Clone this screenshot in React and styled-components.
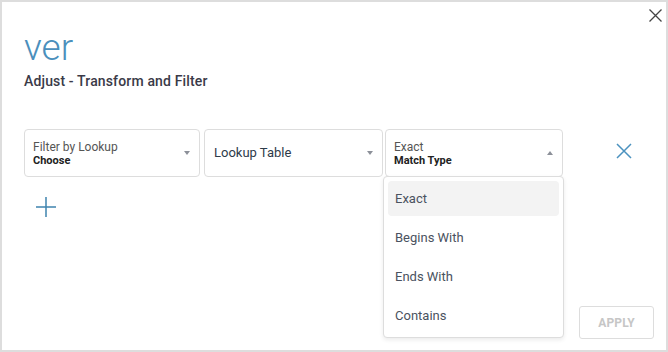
import styled, { createGlobalStyle } from "styled-components";

const GlobalStyle = createGlobalStyle`
  html, body {
    margin: 0;
    padding: 0;
    background: #fff;
  }
  * {
    box-sizing: border-box;
  }
`;

// Cadre du dialogue
const Frame = styled.div`
  position: relative;
  width: 668px;
  height: 352px;
  border: 2px solid #dddddd;
  background: #fff;
  display: flex;
  flex-direction: column;
  padding: 24px 12px 11px 22px;
  font-family: Roboto, "Liberation Sans", Arial, sans-serif;
`;

const CloseButton = styled.button`
  position: absolute;
  top: 5px;
  right: 3px;
  width: 16px;
  height: 16px;
  padding: 0;
  border: none;
  background: none;
  cursor: pointer;
  display: flex;
  align-items: center;
  justify-content: center;
`;

const Title = styled.h1`
  margin: 0;
  font-size: 37px;
  line-height: 44px;
  font-weight: 300;
  color: #4b8fbc;
`;

const Subtitle = styled.h2`
  margin: 2px 0 0;
  font-size: 14px;
  line-height: 18px;
  font-weight: 500;
  letter-spacing: 0.15px;
  color: #3a3a48;
`;

const FilterRow = styled.div`
  display: flex;
  align-items: flex-start;
  gap: 2px;
  margin-top: 39px;
`;

const SelectWrap = styled.div`
  position: relative;
  width: ${(p) => p.$w}px;
  margin-right: ${(p) => p.$mr || 0}px;
`;

const SelectBox = styled.div`
  height: 48px;
  border: 1px solid #dddddd;
  border-radius: 4px;
  background: #fff;
  display: flex;
  align-items: center;
  padding: 0 9px 0 8px;
  cursor: pointer;
`;

const SelectText = styled.div`
  flex: 1;
  display: flex;
  flex-direction: column;
  min-width: 0;
`;

const Label = styled.span`
  font-size: 12px;
  line-height: 15px;
  color: #555;
`;

const Value = styled.span`
  font-size: 11px;
  line-height: 12px;
  font-weight: 700;
  color: #222;
`;

const Placeholder = styled.span`
  font-size: 13px;
  line-height: 16px;
  color: #2e3b4a;
  padding-left: 1px;
`;

const Caret = styled.span`
  width: 0;
  height: 0;
  border-left: 3.5px solid transparent;
  border-right: 3.5px solid transparent;
  ${(p) =>
    p.$up
      ? "border-bottom: 4px solid #8c9099;"
      : "border-top: 4px solid #8c9099;"}
  margin-top: -1px;
`;

const Menu = styled.ul`
  position: absolute;
  top: 47px;
  left: -2px;
  width: 181px;
  margin: 0;
  padding: 4px;
  list-style: none;
  background: #fff;
  border: 1px solid #dddddd;
  border-radius: 4px;
  box-shadow: 0 2px 4px rgba(0, 0, 0, 0.08);
  display: flex;
  flex-direction: column;
  gap: 4px;
  z-index: 2;
`;

const MenuItem = styled.li`
  height: 35px;
  display: flex;
  align-items: center;
  padding: 0 7px;
  border-radius: 4px;
  font-size: 13px;
  color: #4a5260;
  background: ${(p) => (p.$active ? "#f3f3f3" : "transparent")};
  cursor: pointer;
`;

const IconButton = styled.button`
  width: ${(p) => p.$size}px;
  height: ${(p) => p.$size}px;
  padding: 0;
  border: none;
  background: none;
  cursor: pointer;
  display: flex;
  align-items: center;
  justify-content: center;
  margin: ${(p) => p.$margin || 0};
`;

const Footer = styled.div`
  margin-top: auto;
  display: flex;
  justify-content: flex-end;
`;

const ApplyButton = styled.button`
  width: 75px;
  height: 33px;
  border: 1px solid #dddddd;
  border-radius: 3px;
  background: #fff;
  color: #c6c6c6;
  font-family: Roboto, "Liberation Sans", Arial, sans-serif;
  font-size: 12px;
  font-weight: 700;
  letter-spacing: 0.1px;
  cursor: default;
`;

const matchTypes = ["Exact", "Begins With", "Ends With", "Contains"];

function App() {
  return (
    <>
      <GlobalStyle />
      <Frame>
        <CloseButton aria-label="Close">
          <svg width="13" height="13" viewBox="0 0 13 13">
            <path d="M0.5 0.5 L12.5 12.5 M12.5 0.5 L0.5 12.5" stroke="#444" strokeWidth="1.3" />
          </svg>
        </CloseButton>

        <Title>ver</Title>
        <Subtitle>Adjust - Transform and Filter</Subtitle>

        <FilterRow>
          <SelectWrap $w={176} $mr={2}>
            <SelectBox>
              <SelectText>
                <Label>Filter by Lookup</Label>
                <Value>Choose</Value>
              </SelectText>
              <Caret />
            </SelectBox>
          </SelectWrap>

          <SelectWrap $w={179}>
            <SelectBox>
              <SelectText>
                <Placeholder>Lookup Table</Placeholder>
              </SelectText>
              <Caret />
            </SelectBox>
          </SelectWrap>

          <SelectWrap $w={178}>
            <SelectBox>
              <SelectText>
                <Label>Exact</Label>
                <Value>Match Type</Value>
              </SelectText>
              <Caret $up />
            </SelectBox>
            <Menu>
              {matchTypes.map((m, i) => (
                <MenuItem key={m} $active={i === 0}>
                  {m}
                </MenuItem>
              ))}
            </Menu>
          </SelectWrap>

          <IconButton $size={16} $margin="14px 0 0 51px" aria-label="Remove">
            <svg width="16" height="16" viewBox="0 0 16 16">
              <path d="M1 1 L15 15 M15 1 L1 15" stroke="#4b92bf" strokeWidth="1.5" />
            </svg>
          </IconButton>
        </FilterRow>

        <IconButton $size={20} $margin="20px 0 0 12px" aria-label="Add">
          <svg width="20" height="20" viewBox="0 0 20 20">
            <path d="M10 0 V20 M0 10 H20" stroke="#3f84ae" strokeWidth="1.5" />
          </svg>
        </IconButton>

        <Footer>
          <ApplyButton>APPLY</ApplyButton>
        </Footer>
      </Frame>
    </>
  );
}

export default App;
